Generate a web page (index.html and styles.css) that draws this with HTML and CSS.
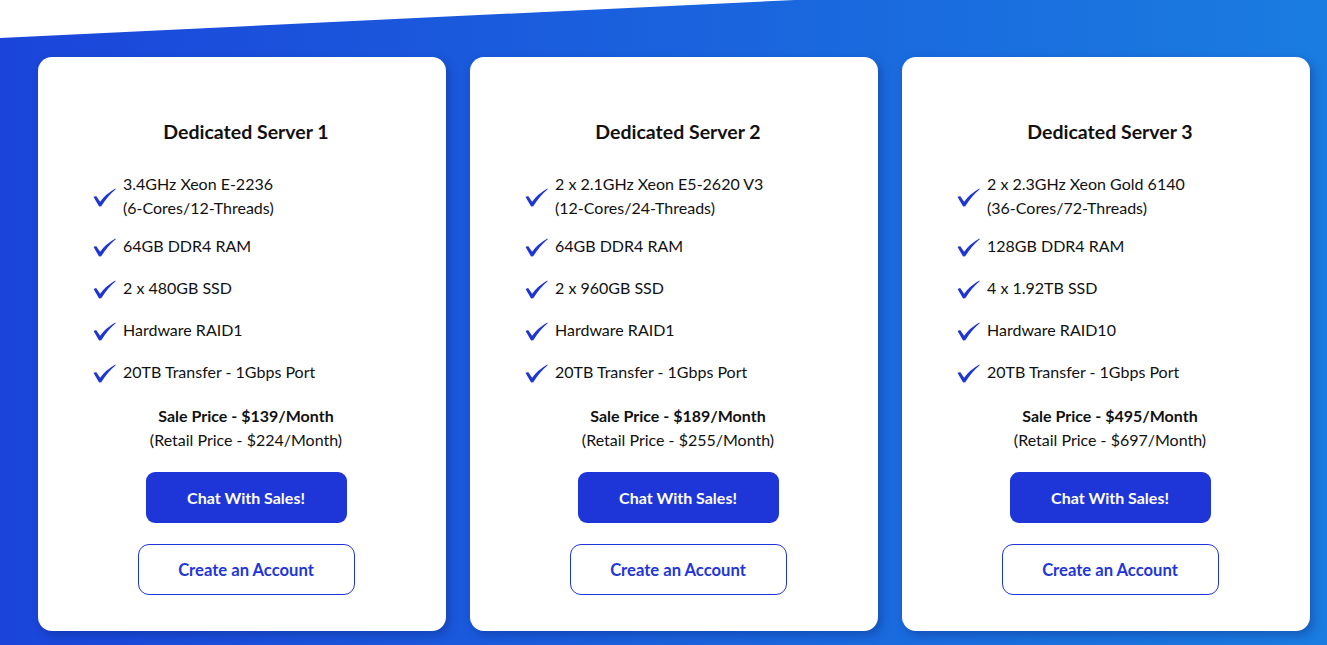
FILE: index.html
```html
<!DOCTYPE html>
<html lang="en">
<head>
<meta charset="utf-8">
<title>Dedicated Servers</title>
<link rel="stylesheet" href="styles.css">
</head>
<body>
<section class="pricing">
  <div class="wedge"></div>
  <div class="cards">
    <div class="card">
      <h3 class="title">Dedicated Server 1</h3>
      <ul class="features">
        <li><svg class="chk" viewBox="0 0 24 20"><path d="M0.5 9.5 L3.2 8.3 L7.4 14.6 Q13 6.5 23.5 0.6 L23.8 1.2 Q15 8.5 8.6 19.2 L6.3 19.6 Z"/></svg><span>3.4GHz Xeon E-2236<br>(6-Cores/12-Threads)</span></li>
        <li><svg class="chk" viewBox="0 0 24 20"><path d="M0.5 9.5 L3.2 8.3 L7.4 14.6 Q13 6.5 23.5 0.6 L23.8 1.2 Q15 8.5 8.6 19.2 L6.3 19.6 Z"/></svg><span>64GB DDR4 RAM</span></li>
        <li><svg class="chk" viewBox="0 0 24 20"><path d="M0.5 9.5 L3.2 8.3 L7.4 14.6 Q13 6.5 23.5 0.6 L23.8 1.2 Q15 8.5 8.6 19.2 L6.3 19.6 Z"/></svg><span>2 x 480GB SSD</span></li>
        <li><svg class="chk" viewBox="0 0 24 20"><path d="M0.5 9.5 L3.2 8.3 L7.4 14.6 Q13 6.5 23.5 0.6 L23.8 1.2 Q15 8.5 8.6 19.2 L6.3 19.6 Z"/></svg><span>Hardware RAID1</span></li>
        <li><svg class="chk" viewBox="0 0 24 20"><path d="M0.5 9.5 L3.2 8.3 L7.4 14.6 Q13 6.5 23.5 0.6 L23.8 1.2 Q15 8.5 8.6 19.2 L6.3 19.6 Z"/></svg><span>20TB Transfer - 1Gbps Port</span></li>
      </ul>
      <p class="price"><strong>Sale Price - $139/Month</strong><br>(Retail Price - $224/Month)</p>
      <a class="btn btn-solid" href="#">Chat With Sales!</a>
      <a class="btn btn-outline" href="#">Create an Account</a>
    </div>
    <div class="card">
      <h3 class="title">Dedicated Server 2</h3>
      <ul class="features">
        <li><svg class="chk" viewBox="0 0 24 20"><path d="M0.5 9.5 L3.2 8.3 L7.4 14.6 Q13 6.5 23.5 0.6 L23.8 1.2 Q15 8.5 8.6 19.2 L6.3 19.6 Z"/></svg><span>2 x 2.1GHz Xeon E5-2620 V3<br>(12-Cores/24-Threads)</span></li>
        <li><svg class="chk" viewBox="0 0 24 20"><path d="M0.5 9.5 L3.2 8.3 L7.4 14.6 Q13 6.5 23.5 0.6 L23.8 1.2 Q15 8.5 8.6 19.2 L6.3 19.6 Z"/></svg><span>64GB DDR4 RAM</span></li>
        <li><svg class="chk" viewBox="0 0 24 20"><path d="M0.5 9.5 L3.2 8.3 L7.4 14.6 Q13 6.5 23.5 0.6 L23.8 1.2 Q15 8.5 8.6 19.2 L6.3 19.6 Z"/></svg><span>2 x 960GB SSD</span></li>
        <li><svg class="chk" viewBox="0 0 24 20"><path d="M0.5 9.5 L3.2 8.3 L7.4 14.6 Q13 6.5 23.5 0.6 L23.8 1.2 Q15 8.5 8.6 19.2 L6.3 19.6 Z"/></svg><span>Hardware RAID1</span></li>
        <li><svg class="chk" viewBox="0 0 24 20"><path d="M0.5 9.5 L3.2 8.3 L7.4 14.6 Q13 6.5 23.5 0.6 L23.8 1.2 Q15 8.5 8.6 19.2 L6.3 19.6 Z"/></svg><span>20TB Transfer - 1Gbps Port</span></li>
      </ul>
      <p class="price"><strong>Sale Price - $189/Month</strong><br>(Retail Price - $255/Month)</p>
      <a class="btn btn-solid" href="#">Chat With Sales!</a>
      <a class="btn btn-outline" href="#">Create an Account</a>
    </div>
    <div class="card">
      <h3 class="title">Dedicated Server 3</h3>
      <ul class="features">
        <li><svg class="chk" viewBox="0 0 24 20"><path d="M0.5 9.5 L3.2 8.3 L7.4 14.6 Q13 6.5 23.5 0.6 L23.8 1.2 Q15 8.5 8.6 19.2 L6.3 19.6 Z"/></svg><span>2 x 2.3GHz Xeon Gold 6140<br>(36-Cores/72-Threads)</span></li>
        <li><svg class="chk" viewBox="0 0 24 20"><path d="M0.5 9.5 L3.2 8.3 L7.4 14.6 Q13 6.5 23.5 0.6 L23.8 1.2 Q15 8.5 8.6 19.2 L6.3 19.6 Z"/></svg><span>128GB DDR4 RAM</span></li>
        <li><svg class="chk" viewBox="0 0 24 20"><path d="M0.5 9.5 L3.2 8.3 L7.4 14.6 Q13 6.5 23.5 0.6 L23.8 1.2 Q15 8.5 8.6 19.2 L6.3 19.6 Z"/></svg><span>4 x 1.92TB SSD</span></li>
        <li><svg class="chk" viewBox="0 0 24 20"><path d="M0.5 9.5 L3.2 8.3 L7.4 14.6 Q13 6.5 23.5 0.6 L23.8 1.2 Q15 8.5 8.6 19.2 L6.3 19.6 Z"/></svg><span>Hardware RAID10</span></li>
        <li><svg class="chk" viewBox="0 0 24 20"><path d="M0.5 9.5 L3.2 8.3 L7.4 14.6 Q13 6.5 23.5 0.6 L23.8 1.2 Q15 8.5 8.6 19.2 L6.3 19.6 Z"/></svg><span>20TB Transfer - 1Gbps Port</span></li>
      </ul>
      <p class="price"><strong>Sale Price - $495/Month</strong><br>(Retail Price - $697/Month)</p>
      <a class="btn btn-solid" href="#">Chat With Sales!</a>
      <a class="btn btn-outline" href="#">Create an Account</a>
    </div>
  </div>
</section>
</body>
</html>
```

FILE: styles.css
```css
* { box-sizing: border-box; }
html, body { margin: 0; padding: 0; }
body {
  font-family: Lato, "Liberation Sans", sans-serif;
  color: #111;
  width: 1327px;
  height: 645px;
  overflow: hidden;
}
.pricing {
  position: relative;
  height: 645px;
  background: linear-gradient(90deg, #1b45da 0%, #1a5fdd 45%, #1a7ce0 100%);
  padding-top: 57px;
}
.wedge {
  position: absolute;
  left: 0;
  top: 0;
  width: 1327px;
  height: 40px;
  background: #fff;
  clip-path: polygon(0 0, 795px 0, 0 38px);
}
.cards {
  display: flex;
  gap: 24px;
  padding: 0 17px 0 38px;
}
.card {
  width: 408px;
  height: 574px;
  background: #fff;
  border-radius: 14px;
  box-shadow: 3px 4px 10px rgba(10, 30, 110, 0.35);
  display: flex;
  flex-direction: column;
  align-items: center;
  padding: 63px 25px 0 33px;
}
.title {
  margin: 0;
  font-size: 19.5px;
  line-height: 24px;
  font-weight: 700;
  color: #111;
}
.features {
  list-style: none;
  margin: 28px 0 0;
  padding: 0 0 0 22px;
  align-self: stretch;
}
.features li {
  display: flex;
  align-items: center;
  min-height: 28px;
  margin-bottom: 14px;
  font-size: 16px;
  line-height: 24px;
  color: #111;
}
.features li:first-child { margin-bottom: 12px; }
.chk {
  width: 23px;
  height: 19px;
  flex: none;
  margin-right: 7px;
  margin-top: 2px;
  fill: #1e36d6;
}
.price {
  margin: 4px 0 0;
  text-align: center;
  font-size: 16px;
  line-height: 24px;
  color: #111;
}
.price strong { font-weight: 700; }
.btn {
  display: flex;
  align-items: center;
  justify-content: center;
  height: 51px;
  text-decoration: none;
  font-weight: 700;
}
.btn-solid {
  margin-top: 20px;
  width: 201px;
  background: #1e36d8;
  color: #fff;
  border-radius: 9px;
  font-size: 16px;
}
.btn-outline {
  margin-top: 21px;
  width: 217px;
  border: 1px solid #1e36d8;
  color: #1e36d8;
  border-radius: 11px;
  font-size: 16.6px;
}
```
